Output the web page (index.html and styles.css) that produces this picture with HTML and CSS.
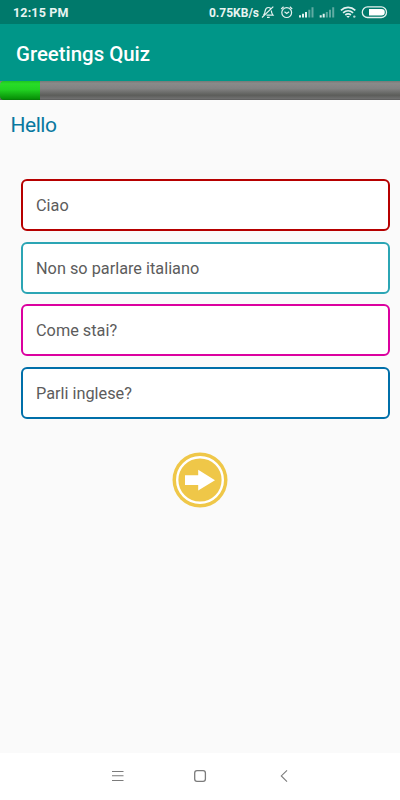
FILE: index.html
```html
<!DOCTYPE html>
<html lang="en">
<head>
<meta charset="utf-8">
<title>Greetings Quiz</title>
<link rel="stylesheet" href="styles.css">
</head>
<body>
<div class="screen">
  <div class="status">
    <span class="time">12:15 PM</span>
    <span class="speed">0.75KB/s</span>
    <svg class="icons" width="128" height="24" viewBox="260 0 128 24" fill="none" stroke="#e3f1ef">
      <g stroke-width="1.2">
        <path d="M263.500 15.200c1.300-1.400 1.500-2.400 1.700-4.400.3-2.200 1.500-3.300 3.200-3.300 1 0 1.700.4 2.300 1M271.300 10.500c.1 2.300.5 3.300 1.700 4.700h-6.500M267 17.300h2.700M262 17.500 273.300 6.600"/>
        <circle cx="286.700" cy="12.600" r="4.900"/>
        <path d="M284.500 11.700l2.200 1.700 2.400-1.700M281.200 9l2.400-2.200M292.200 9l-2.400-2.200"/>
      </g>
      <g stroke-width="2">
        <path d="M300 15.300v2.200M303 13.800v3.700M306 12v5.500"/>
        <path d="M309.300 9.700v7.800M312.500 7.200v10.300" opacity=".42"/>
        <path d="M320.700 15.300v2.200M323.700 13.800v3.700"/>
        <path d="M326.800 12v5.500M330 9.700v7.800M333.200 7.200v10.300" opacity=".42"/>
      </g>
      <g stroke-width="1.7">
        <path d="M340.900 10.300c4.200-3.900 10.200-3.900 14.400 0M343.100 12.800c3-2.700 7-2.700 10 0M345.300 15c1.700-1.500 3.900-1.500 5.600 0"/>
        <path d="M346.300 16.100h3.600l-1.800 1.900z" fill="#e3f1ef" stroke="none"/>
        <circle cx="354.300" cy="16.600" r="1.200" fill="#b4d8d3" stroke="none"/>
      </g>
      <rect x="362.300" y="6.900" width="24.200" height="10.600" rx="5.300" stroke-width="1.300"/>
      <path d="M369 8.900h12.500a3.300 3.300 0 0 1 0 6.600H369z" fill="#fff" stroke="none"/>
    </svg>
  </div>
  <header class="appbar">Greetings Quiz</header>
  <div class="progress"><div class="fill"></div></div>
  <main class="quiz">
    <h1 class="question">Hello</h1>
    <div class="answers">
      <div class="answer red">Ciao</div>
      <div class="answer teal">Non so parlare italiano</div>
      <div class="answer pink">Come stai?</div>
      <div class="answer blue">Parli inglese?</div>
    </div>
    <svg class="next" width="56" height="56" viewBox="0 0 56 56">
      <circle cx="28" cy="28" r="27.500" fill="#efc748"/>
      <circle cx="28" cy="28" r="22.800" fill="none" stroke="#fff" stroke-width="2.400"/>
      <path d="M13 23.200h13.200v-5.500L43 28.200 26.200 38.500V33H13z" fill="#fff"/>
    </svg>
  </main>
  <nav class="nav">
    <svg width="400" height="47" viewBox="0 753 400 47" fill="none" stroke="#7b7b7b" stroke-width="1.100">
      <path d="M112 771.500h11.500M112 775.800h11.500M112 780.500h11.500"/>
      <rect x="194.700" y="770.700" width="10.700" height="10.700" rx="2.300" stroke-width="1.300"/>
      <path d="M287 770.300l-5.700 5.600 5.700 5.700"/>
    </svg>
  </nav>
</div>
</body>
</html>
```
FILE: styles.css
```css
* { box-sizing: border-box; }
body { margin: 0; font-family: Roboto, "Liberation Sans", sans-serif; }
.screen {
  width: 400px;
  height: 800px;
  display: flex;
  flex-direction: column;
  background: #fafafa;
  overflow: hidden;
}
.status {
  height: 24px;
  flex: none;
  display: flex;
  align-items: center;
  padding: 1px 12px 0 13px;
  background: #00796b;
  color: #e8f4f2;
  font-weight: 700;
  font-size: 12.5px;
  white-space: nowrap;
}
.time { letter-spacing: .15px; }
.speed { margin-left: auto; font-size: 12px; }
.icons { flex: none; margin: -1px 0 0 1px; }
.appbar {
  height: 57px;
  flex: none;
  padding-left: 16px;
  background: #009688;
  color: #fff;
  font-size: 20.4px;
  font-weight: 500;
  line-height: 60px;
}
.progress {
  height: 19px;
  flex: none;
  background: linear-gradient(#777a77 0, #8a8a8a 12%, #828282 40%, #5c5d5a 75%, #707070 94%, #555 100%);
}
.fill {
  width: 40px;
  height: 19px;
  border-radius: 4px 0 0 4px;
  background: linear-gradient(#1fc51f 0, #28dc28 15%, #22d222 45%, #079007 94%, #087408 100%);
}
.quiz {
  flex: 1;
  display: flex;
  flex-direction: column;
}
.question {
  margin: 0;
  padding: 11px 0 0 10.500px;
  height: 79px;
  color: #0878a0;
  font-size: 21px;
  font-weight: 400;
  line-height: 28px;
  letter-spacing: -.45px;
}
.answers {
  display: grid;
  grid-auto-rows: 52px;
  row-gap: 10.500px;
  margin: 0 10.500px 0 21px;
}
.answer {
  padding-left: 13px;
  border: 2px solid;
  border-radius: 6px;
  background: #fff;
  font-size: 16.3px;
  line-height: 49px;
  color: #5c5c5c;
}
.red { border-color: #b60000; }
.teal { border-color: #2ba5b4; }
.pink { border-color: #db009f; }
.blue { border-color: #006fa9; }
.next { align-self: center; margin-top: 33px; }
.nav {
  height: 47px;
  flex: none;
  background: #fff;
}
.nav svg { display: block; }
```
